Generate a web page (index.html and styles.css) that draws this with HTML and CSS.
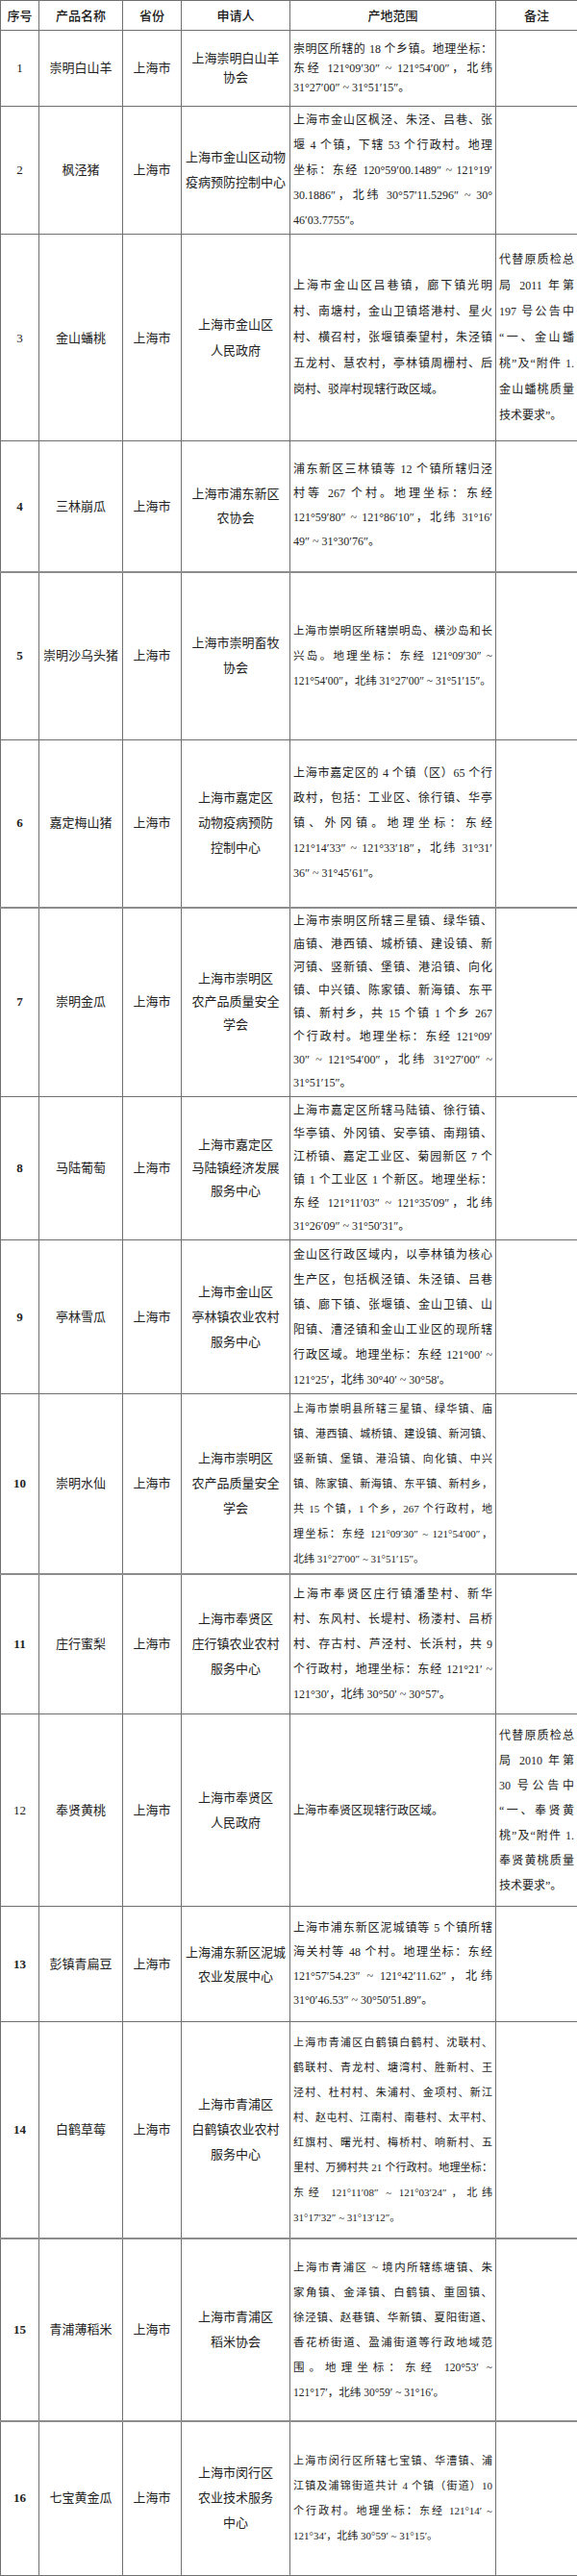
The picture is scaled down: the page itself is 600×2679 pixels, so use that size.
FILE: index.html
```html
<!DOCTYPE html>
<html lang="zh-CN">
<head>
<meta charset="utf-8">
<title>地理标志产品名录</title>
<link rel="stylesheet" href="styles.css">
</head>
<body>
<table class="grid">
  <colgroup>
    <col class="c-no"><col class="c-name"><col class="c-prov"><col class="c-app"><col class="c-area"><col class="c-note">
  </colgroup>
  <thead>
    <tr class="head">
      <th>序号</th><th>产品名称</th><th>省份</th><th>申请人</th><th>产地范围</th><th>备注</th>
    </tr>
  </thead>
  <tbody>
    <tr class="r1">
      <td class="no">1</td><td>崇明白山羊</td><td>上海市</td><td>上海崇明白山羊<br>协会</td>
      <td class="area"><span class="ln">崇明区所辖的 18 个乡镇。地理坐标：</span><span class="ln">东经 121°09′30″ ~ 121°54′00″，北纬</span><span class="ln">31°27′00″ ~ 31°51′15″。</span></td>
      <td></td>
    </tr>
    <tr class="r2">
      <td class="no">2</td><td>枫泾猪</td><td>上海市</td><td>上海市金山区动物<br>疫病预防控制中心</td>
      <td class="area"><span class="ln">上海市金山区枫泾、朱泾、吕巷、张</span><span class="ln">堰 4 个镇，下辖 53 个行政村。地理</span><span class="ln">坐标：东经 120°59′00.1489″ ~ 121°19′</span><span class="ln">30.1886″，北纬 30°57′11.5296″ ~ 30°</span><span class="ln">46′03.7755″。</span></td>
      <td></td>
    </tr>
    <tr class="r3">
      <td class="no">3</td><td>金山蟠桃</td><td>上海市</td><td>上海市金山区<br>人民政府</td>
      <td class="area"><span class="ln">上海市金山区吕巷镇，廊下镇光明</span><span class="ln">村、南塘村，金山卫镇塔港村、星火</span><span class="ln">村、横召村，张堰镇秦望村，朱泾镇</span><span class="ln">五龙村、慧农村，亭林镇周栅村、后</span><span class="ln">岗村、驳岸村现辖行政区域。</span></td>
      <td class="note"><span class="ln">代替原质检总</span><span class="ln">局 2011 年第</span><span class="ln">197 号公告中</span><span class="ln">“一、金山蟠</span><span class="ln">桃”及“附件 1.</span><span class="ln">金山蟠桃质量</span><span class="ln">技术要求”。</span></td>
    </tr>
    <tr class="r4">
      <td class="no bold">4</td><td>三林崩瓜</td><td>上海市</td><td>上海市浦东新区<br>农协会</td>
      <td class="area"><span class="ln">浦东新区三林镇等 12 个镇所辖归泾</span><span class="ln">村等 267 个村。地理坐标：东经</span><span class="ln">121°59′80″ ~ 121°86′10″，北纬 31°16′</span><span class="ln">49″ ~ 31°30′76″。</span></td>
      <td></td>
    </tr>
    <tr class="r5 seam">
      <td class="no bold">5</td><td>崇明沙乌头猪</td><td>上海市</td><td>上海市崇明畜牧<br>协会</td>
      <td class="area small"><span class="ln">上海市崇明区所辖崇明岛、横沙岛和长</span><span class="ln">兴岛。地理坐标：东经 121°09′30″ ~</span><span class="ln">121°54′00″，北纬 31°27′00″ ~ 31°51′15″。</span></td>
      <td></td>
    </tr>
    <tr class="r6">
      <td class="no bold">6</td><td>嘉定梅山猪</td><td>上海市</td><td>上海市嘉定区<br>动物疫病预防<br>控制中心</td>
      <td class="area"><span class="ln">上海市嘉定区的 4 个镇（区）65 个行</span><span class="ln">政村，包括：工业区、徐行镇、华亭</span><span class="ln">镇、外冈镇。地理坐标：东经</span><span class="ln">121°14′33″ ~ 121°33′18″，北纬 31°31′</span><span class="ln">36″ ~ 31°45′61″。</span></td>
      <td></td>
    </tr>
    <tr class="r7 seam">
      <td class="no bold">7</td><td>崇明金瓜</td><td>上海市</td><td>上海市崇明区<br>农产品质量安全<br>学会</td>
      <td class="area"><span class="ln">上海市崇明区所辖三星镇、绿华镇、</span><span class="ln">庙镇、港西镇、城桥镇、建设镇、新</span><span class="ln">河镇、竖新镇、堡镇、港沿镇、向化</span><span class="ln">镇、中兴镇、陈家镇、新海镇、东平</span><span class="ln">镇、新村乡，共 15 个镇 1 个乡 267</span><span class="ln">个行政村。地理坐标：东经 121°09′</span><span class="ln">30″ ~ 121°54′00″，北纬 31°27′00″ ~</span><span class="ln">31°51′15″。</span></td>
      <td></td>
    </tr>
    <tr class="r8">
      <td class="no bold">8</td><td>马陆葡萄</td><td>上海市</td><td>上海市嘉定区<br>马陆镇经济发展<br>服务中心</td>
      <td class="area"><span class="ln">上海市嘉定区所辖马陆镇、徐行镇、</span><span class="ln">华亭镇、外冈镇、安亭镇、南翔镇、</span><span class="ln">江桥镇、嘉定工业区、菊园新区 7 个</span><span class="ln">镇 1 个工业区 1 个新区。地理坐标：</span><span class="ln">东经 121°11′03″ ~ 121°35′09″，北纬</span><span class="ln">31°26′09″ ~ 31°50′31″。</span></td>
      <td></td>
    </tr>
    <tr class="r9">
      <td class="no bold">9</td><td>亭林雪瓜</td><td>上海市</td><td>上海市金山区<br>亭林镇农业农村<br>服务中心</td>
      <td class="area"><span class="ln">金山区行政区域内，以亭林镇为核心</span><span class="ln">生产区，包括枫泾镇、朱泾镇、吕巷</span><span class="ln">镇、廊下镇、张堰镇、金山卫镇、山</span><span class="ln">阳镇、漕泾镇和金山工业区的现所辖</span><span class="ln">行政区域。地理坐标：东经 121°00′ ~</span><span class="ln">121°25′，北纬 30°40′ ~ 30°58′。</span></td>
      <td></td>
    </tr>
    <tr class="r10">
      <td class="no bold">10</td><td>崇明水仙</td><td>上海市</td><td>上海市崇明区<br>农产品质量安全<br>学会</td>
      <td class="area tiny"><span class="ln">上海市崇明县所辖三星镇、绿华镇、庙</span><span class="ln">镇、港西镇、城桥镇、建设镇、新河镇、</span><span class="ln">竖新镇、堡镇、港沿镇、向化镇、中兴</span><span class="ln">镇、陈家镇、新海镇、东平镇、新村乡，</span><span class="ln">共 15 个镇，1 个乡，267 个行政村，地</span><span class="ln">理坐标：东经 121°09′30″ ~ 121°54′00″，</span><span class="ln">北纬 31°27′00″ ~ 31°51′15″。</span></td>
      <td></td>
    </tr>
    <tr class="r11 seam">
      <td class="no bold">11</td><td>庄行蜜梨</td><td>上海市</td><td>上海市奉贤区<br>庄行镇农业农村<br>服务中心</td>
      <td class="area"><span class="ln">上海市奉贤区庄行镇潘垫村、新华</span><span class="ln">村、东风村、长堤村、杨溇村、吕桥</span><span class="ln">村、存古村、芦泾村、长浜村，共 9</span><span class="ln">个行政村，地理坐标：东经 121°21′ ~</span><span class="ln">121°30′，北纬 30°50′ ~ 30°57′。</span></td>
      <td></td>
    </tr>
    <tr class="r12">
      <td class="no">12</td><td>奉贤黄桃</td><td>上海市</td><td>上海市奉贤区<br>人民政府</td>
      <td class="area"><span class="ln">上海市奉贤区现辖行政区域。</span></td>
      <td class="note"><span class="ln">代替原质检总</span><span class="ln">局 2010 年第</span><span class="ln">30 号公告中</span><span class="ln">“一、奉贤黄</span><span class="ln">桃”及“附件 1.</span><span class="ln">奉贤黄桃质量</span><span class="ln">技术要求”。</span></td>
    </tr>
    <tr class="r13">
      <td class="no bold">13</td><td>彭镇青扁豆</td><td>上海市</td><td>上海浦东新区泥城<br>农业发展中心</td>
      <td class="area"><span class="ln">上海市浦东新区泥城镇等 5 个镇所辖</span><span class="ln">海关村等 48 个村。地理坐标：东经</span><span class="ln">121°57′54.23″ ~ 121°42′11.62″，北纬</span><span class="ln">31°0′46.53″ ~ 30°50′51.89″。</span></td>
      <td></td>
    </tr>
    <tr class="r14">
      <td class="no bold">14</td><td>白鹤草莓</td><td>上海市</td><td>上海市青浦区<br>白鹤镇农业农村<br>服务中心</td>
      <td class="area tiny"><span class="ln">上海市青浦区白鹤镇白鹤村、沈联村、</span><span class="ln">鹤联村、青龙村、塘湾村、胜新村、王</span><span class="ln">泾村、杜村村、朱浦村、金项村、新江</span><span class="ln">村、赵屯村、江南村、南巷村、太平村、</span><span class="ln">红旗村、曙光村、梅桥村、响新村、五</span><span class="ln">里村、万狮村共 21 个行政村。地理坐标：</span><span class="ln">东经 121°11′08″ ~ 121°03′24″，北纬</span><span class="ln">31°17′32″ ~ 31°13′12″。</span></td>
      <td></td>
    </tr>
    <tr class="r15 seam">
      <td class="no bold">15</td><td>青浦薄稻米</td><td>上海市</td><td>上海市青浦区<br>稻米协会</td>
      <td class="area small"><span class="ln">上海市青浦区 ~ 境内所辖练塘镇、朱</span><span class="ln">家角镇、金泽镇、白鹤镇、重固镇、</span><span class="ln">徐泾镇、赵巷镇、华新镇、夏阳街道、</span><span class="ln">香花桥街道、盈浦街道等行政地域范</span><span class="ln">围。地理坐标：东经 120°53′ ~</span><span class="ln">121°17′，北纬 30°59′ ~ 31°16′。</span></td>
      <td></td>
    </tr>
    <tr class="r16 seam">
      <td class="no bold">16</td><td>七宝黄金瓜</td><td>上海市</td><td>上海市闵行区<br>农业技术服务<br>中心</td>
      <td class="area tiny"><span class="ln">上海市闵行区所辖七宝镇、华漕镇、浦</span><span class="ln">江镇及浦锦街道共计 4 个镇（街道）10</span><span class="ln">个行政村。地理坐标：东经 121°14′ ~</span><span class="ln">121°34′，北纬 30°59′ ~ 31°15′。</span></td>
      <td></td>
    </tr>
  </tbody>
</table>
</body>
</html>
```

FILE: styles.css
```css
html, body {
  margin: 0;
  padding: 0;
  background: #ffffff;
}

.grid {
  width: 600px;
  border-collapse: collapse;
  table-layout: fixed;
  font-family: "Liberation Serif", "Noto Sans CJK SC", serif;
  color: #222222;
}

.c-no { width: 40px; }
.c-name { width: 87px; }
.c-prov { width: 61px; }
.c-app { width: 113px; }
.c-area { width: 214px; }
.c-note { width: 85px; }

.grid th,
.grid td {
  border: 1px solid #707070;
  padding: 0 2px;
  vertical-align: middle;
  text-align: center;
  font-size: 13px;
  font-weight: normal;
  overflow: hidden;
}

.grid th {
  font-family: "Noto Sans CJK SC", sans-serif;
  font-weight: 500;
  color: #1a1a1a;
  height: 30px;
  line-height: 18px;
}

.grid td.no {
  font-size: 13px;
}

.grid td.bold {
  font-weight: bold;
}

.grid td.area,
.grid td.note {
  text-align: justify;
  padding: 0 3px;
  font-size: 12px;
}

.grid td.area.small {
  font-size: 11.5px;
}

.grid td.area.tiny {
  font-size: 11px;
}

.ln {
  display: block;
  text-align: justify;
  text-align-last: justify;
}

.ln:last-child {
  text-align-last: left;
}

.seam td {
  border-top: 2px solid #8c8c8c;
}

.r1 { height: 79px; line-height: 20px; }
.r2 { height: 133px; line-height: 26px; }
.r3 { height: 215px; line-height: 27px; }
.r4 { height: 136px; line-height: 25px; }
.r5 { height: 175px; line-height: 26px; }
.r6 { height: 174px; line-height: 26px; }
.r7 { height: 197px; line-height: 24px; }
.r8 { height: 149px; line-height: 24px; }
.r9 { height: 160px; line-height: 26px; }
.r10 { height: 187px; line-height: 26px; }
.r11 { height: 146px; line-height: 26px; }
.r12 { height: 200px; line-height: 26px; }
.r13 { height: 120px; line-height: 25px; }
.r14 { height: 225px; line-height: 26px; }
.r15 { height: 190px; line-height: 26px; }
.r16 { height: 161px; line-height: 26px; }
```
